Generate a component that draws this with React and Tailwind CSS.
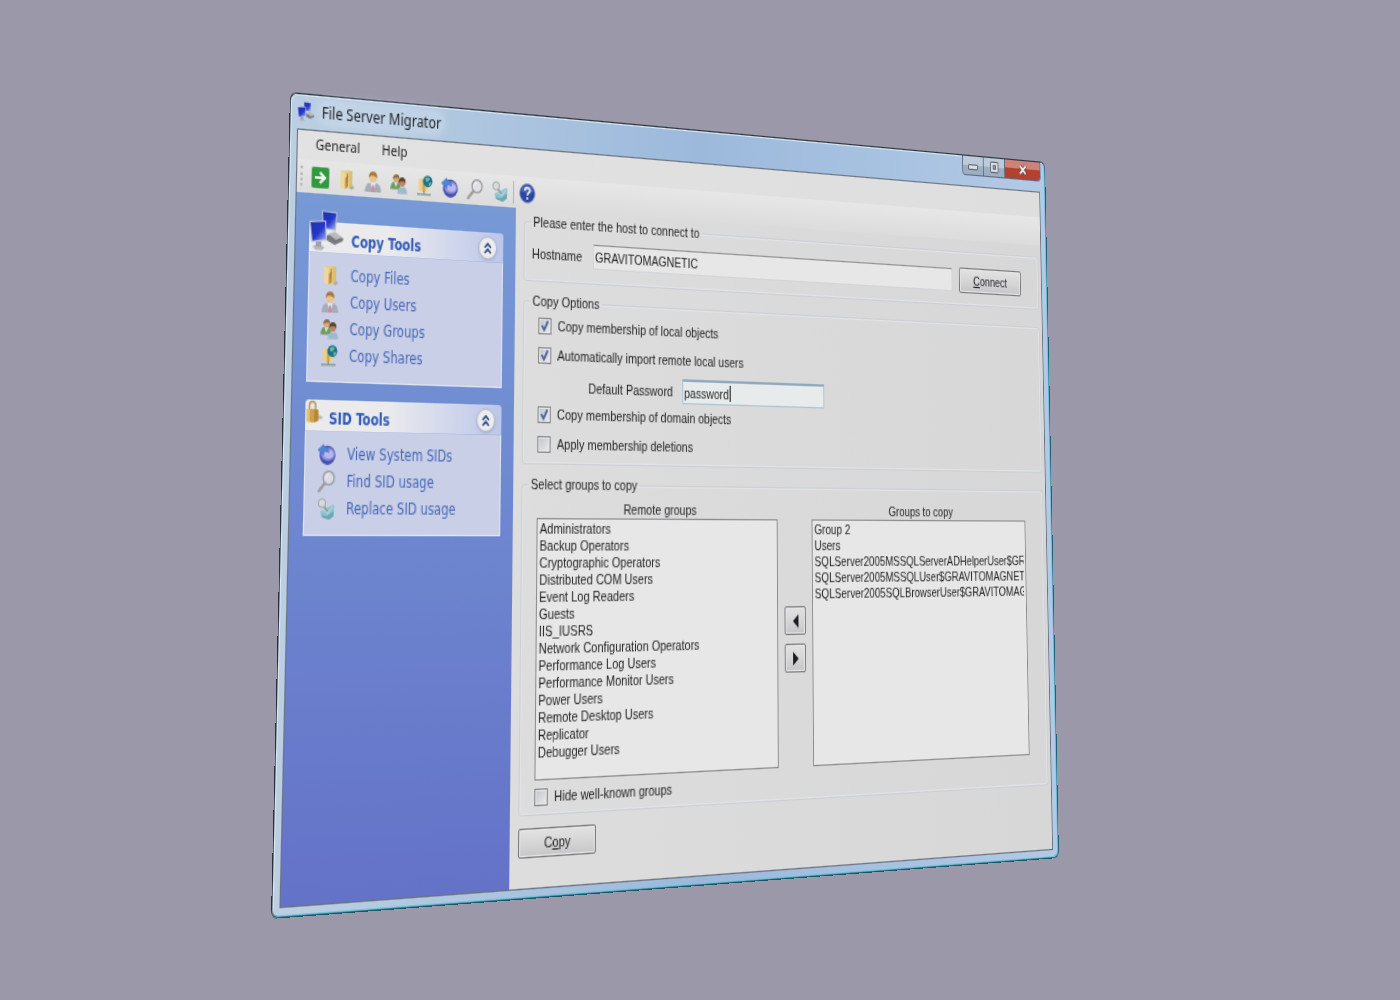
import React, { useState } from "react";

const remoteGroups = [
  "Administrators",
  "Backup Operators",
  "Cryptographic Operators",
  "Distributed COM Users",
  "Event Log Readers",
  "Guests",
  "IIS_IUSRS",
  "Network Configuration Operators",
  "Performance Log Users",
  "Performance Monitor Users",
  "Power Users",
  "Remote Desktop Users",
  "Replicator",
  "Debugger Users",
];

const copyGroups = [
  "Group 2",
  "Users",
  "SQLServer2005MSSQLServerADHelperUser$GRAVITOMAGNETIC",
  "SQLServer2005MSSQLUser$GRAVITOMAGNETIC",
  "SQLServer2005SQLBrowserUser$GRAVITOMAGNETIC",
];

const ServersIcon = ({ className }) => (
  <svg viewBox="0 0 32 32" className={className} aria-hidden="true">
    <defs>
      <linearGradient id="screen" x1="0" y1="0" x2="1" y2="1">
        <stop offset="0" stopColor="#1d2fae" />
        <stop offset="0.55" stopColor="#2438c8" />
        <stop offset="1" stopColor="#a9b8ee" />
      </linearGradient>
    </defs>
    <path d="M16 19l7-2 8 4-1 2-7 3-9-4z" fill="#77797e" />
    <path d="M17 18l6-2 7 4-6 2z" fill="#b9bbbe" />
    <path d="M3 28l5-2 6 2-2 2.500-6 0z" fill="#b4b7bd" />
    <path d="M6 24h5v4H6z" fill="#9ea2aa" />
    <path d="M11 0.500l14 1-1 14-12-1z" fill="#b9bfd6" />
    <path d="M12 1.500l12 0.800-1 12-10-0.800z" fill="url(#screen)" />
    <path d="M0 9l15-1 1 15-14 2z" fill="#c3c8dc" />
    <path d="M1 10l13-1 1 13-12 1.800z" fill="url(#screen)" />
  </svg>
);

const ArrowIcon = () => (
  <svg viewBox="0 0 16 16" className="size-4" aria-hidden="true">
    <rect x="0.500" y="0.500" width="15" height="15" rx="1" fill="#2f9a3b" stroke="#4c9a55" />
    <path d="M3 8h9M7.500 4l4.500 4-4.500 4" fill="none" stroke="#f2f6f0" strokeWidth="2.200" />
  </svg>
);

const FilesIcon = () => (
  <svg viewBox="0 0 16 16" className="size-4" aria-hidden="true">
    <path d="M2 1.500l6-0.500 5 0.500v12l-5 1.500-6-1z" fill="#e6cb88" />
    <path d="M2 1.500l4.500 1.500V15L2 14z" fill="#eed79c" />
    <path d="M6.500 7l2.500-3v9l-2.500 2z" fill="#b98c40" />
    <path d="M9.500 1.200l3.500 0.300v11.500l-3.500 0.500z" fill="#dfbe74" />
    <path d="M8.300 3v7" stroke="#a5803c" strokeWidth="0.800" />
    <path d="M10 14l3-2 2 1.500-2.500 2z" fill="#aab09c" />
  </svg>
);

const UserIcon = () => (
  <svg viewBox="0 0 16 16" className="size-4" aria-hidden="true">
    <path d="M0.500 16c0-4.500 2-6.500 4.500-7h6c2.500 0.500 4.500 2.500 4.500 7z" fill="#a6acb9" />
    <path d="M5.500 9L8 16 10.500 9z" fill="#e4e8f2" />
    <path d="M7.300 10.500h1.400l0.700 5.500H6.600z" fill="#d4899a" />
    <circle cx="8" cy="5" r="3.600" fill="#e9c28f" />
    <path d="M4.200 5C4 1.500 6 0.300 8 0.300s4 1.200 3.800 4.700C10.500 4 9 3.600 7 3.200 6 3.600 5 4 4.200 5z" fill="#a8783c" />
  </svg>
);

const GroupIcon = () => (
  <svg viewBox="0 0 16 16" className="size-4" aria-hidden="true">
    <path d="M0 12.500c0-3.500 1.500-5.500 3.500-5.800h3c2 0.300 3 2 3 5.800z" fill="#6f9a62" />
    <path d="M3.500 7l1.500 4L7 7z" fill="#dfe5da" />
    <circle cx="5.500" cy="4.300" r="2.900" fill="#d9a877" />
    <path d="M2.300 4.700C2.300 2 4 0.800 5.800 0.900 7.800 1 8.500 2.500 8.300 4 7 3.500 5 2.800 2.300 4.700z" fill="#8a6a46" />
    <path d="M6.500 15.800c0-3.200 1.500-5 3.500-5.300h2.800c2 0.300 3 2.300 3 5.300z" fill="#9fb9cc" />
    <circle cx="11" cy="6.800" r="3.100" fill="#b98562" />
    <path d="M7.600 7.500C7.600 4 9.500 3 11 3s3.300 1 3.200 4.200C12.500 5.800 10 5.600 7.600 7.500z" fill="#5d4334" />
  </svg>
);

const ShareIcon = () => (
  <svg viewBox="0 0 16 16" className="size-4" aria-hidden="true">
    <path d="M2.500 3l6-1 3 1v9l-4 1-5-1z" fill="#ebd08a" />
    <path d="M6 3.500l2.500-1V12L6.500 13z" fill="#caa050" />
    <circle cx="11" cy="4.600" r="4.400" fill="#1f6f94" />
    <path d="M8.500 2.500c2-1.800 4-1 4.500 0L11.500 4.500l-2 0.500zM11.500 6l2.500-1 0.500 1.500L12.500 8z" fill="#6fc08a" />
    <path d="M7.500 12v2.500M1 14.800h13" stroke="#829487" strokeWidth="1.200" />
  </svg>
);

const ViewIcon = () => (
  <svg viewBox="0 0 16 16" className="size-4" aria-hidden="true">
    <circle cx="8.500" cy="8.800" r="7.100" fill="#4a4fae" />
    <ellipse cx="8.800" cy="8" rx="6.200" ry="4.800" fill="#8f90de" />
    <ellipse cx="9.500" cy="8" rx="4.200" ry="3" fill="#b9b8ee" />
    <path d="M0 5L5 0.800v2c3-0.500 4.500 0.700 4.500 4-1.500-0.800-2.500-1-4.500-0.800v2.500z" fill="#4f86d8" stroke="#3d68b6" strokeWidth="0.500" />
  </svg>
);

const FindIcon = () => (
  <svg viewBox="0 0 16 16" className="size-4" aria-hidden="true">
    <path d="M6.500 9.500L1.500 15" stroke="#a09a98" strokeWidth="2.200" strokeLinecap="round" />
    <circle cx="10" cy="5.500" r="4.900" fill="#dfe0e6" fillOpacity="0.700" stroke="#9b9a9f" strokeWidth="1.300" />
    <path d="M7.200 5.500c0-1.800 1.200-2.800 2.800-2.800" fill="none" stroke="#f4f4f4" />
  </svg>
);

const ReplaceIcon = () => (
  <svg viewBox="0 0 16 16" className="size-4" aria-hidden="true">
    <path d="M3 10l5-2 6-3 1.500 1-0.500 7-4 3-7-2z" fill="#8fc4cf" />
    <path d="M4 12.500l5 1 6-4v4l-4 2.500-6-1.500z" fill="#6aa7b9" />
    <path d="M6 9l4 2 4-4.500" fill="none" stroke="#b4d6de" strokeWidth="1.100" />
    <circle cx="4.500" cy="4" r="3.200" fill="#d8dcdc" stroke="#9fa8a8" />
    <path d="M6.500 6.500l3 3.500" stroke="#8c9a9a" strokeWidth="1.600" />
  </svg>
);

const HelpIcon = () => (
  <svg viewBox="0 0 16 16" className="size-4" aria-hidden="true">
    <circle cx="8" cy="8" r="7.500" fill="#2c46a0" stroke="#8e9bc6" strokeWidth="0.800" />
    <path d="M2 6.500a6.200 6.200 0 0 1 12 0c-3 1.800-8 2-12 0z" fill="#6079c4" fillOpacity="0.600" />
    <path d="M5.600 6c0-3.200 5-3 5-0.300 0 1.800-2.500 1.900-2.500 4" fill="none" stroke="#eef0f6" strokeWidth="1.700" />
    <circle cx="8" cy="12" r="1.100" fill="#eef0f6" />
  </svg>
);

const LockIcon = ({ className }) => (
  <svg viewBox="0 0 16 18" className={className} aria-hidden="true">
    <path d="M9 14l5 0.500 2-1.500-4-2z" fill="#8f8c88" fillOpacity="0.500" />
    <path d="M3.500 8V4.500C3.500 0.500 9 0.500 9 4.500V8" fill="none" stroke="#b39a62" strokeWidth="1.500" />
    <path d="M1 7.500l5-0.700 5.500 0.700v8L7 17l-6-1z" fill="#cfa24a" />
    <path d="M1 7.500l3-0.400v9.400L1 16z" fill="#e2c274" />
    <path d="M8 7.200l3.500 0.300v8L8 16.700z" fill="#b08638" />
  </svg>
);

const ChevronButton = ({ label }) => (
  <button
    aria-label={label}
    className="mr-[6px] ml-auto flex size-[18px] items-center justify-center rounded-full border border-[#b4b8cc] bg-[#ececee] shadow-sm"
  >
    <svg viewBox="0 0 10 10" className="size-[10px]" fill="none" stroke="#26407f" strokeWidth="1.500">
      <path d="M2 4.800L5 1.900l3 2.900M2 9l3-2.900L8 9" />
    </svg>
  </button>
);

const tools = [
  { name: "Connect", icon: ArrowIcon },
  { name: "Copy Files", icon: FilesIcon },
  { name: "Copy Users", icon: UserIcon },
  { name: "Copy Groups", icon: GroupIcon },
  { name: "Copy Shares", icon: ShareIcon },
  { name: "View System SIDs", icon: ViewIcon },
  { name: "Find SID usage", icon: FindIcon },
  { name: "Replace SID usage", icon: ReplaceIcon },
];

const TaskPanel = ({ title, icon, items, wide }) => (
  <section>
    <div className="relative flex h-[23px] items-center rounded-t-[3px] bg-linear-to-r from-[#ebebed] from-40% to-[#bcc6ea]">
      {icon}
      <h2
        className={`pt-1 text-[12px] leading-[14px] font-bold text-[#3059b4] ${wide ? "pl-[38px]" : "pl-[21px]"}`}
      >
        {title}
      </h2>
      <ChevronButton label={`Collapse ${title}`} />
    </div>
    <ul className="border border-t-0 border-[#e2e5f0] bg-[#c9cfe6] pt-[7px] pb-[9px] pl-[11px]">
      {items.map(({ name, icon: Icon }) => (
        <li key={name} className="h-5">
          <a href="#" className="flex h-5 items-center gap-[10px] whitespace-nowrap text-[12px] text-[#4668b8]">
            <Icon />
            {name}
          </a>
        </li>
      ))}
    </ul>
  </section>
);

const CheckRow = ({ label, defaultChecked }) => {
  const [checked, setChecked] = useState(!!defaultChecked);
  return (
    <label className="flex h-[23px] items-center gap-[6px] pl-[14px]">
      <span className="relative flex size-[13px]">
        <input
          type="checkbox"
          checked={checked}
          onChange={(e) => setChecked(e.target.checked)}
          className="size-[13px] appearance-none border border-[#85878b] bg-linear-to-br from-[#bfc3ca] to-[#ececec] shadow-[inset_0_0_0_1px_#e6e6e6]"
        />
        {checked && (
          <svg viewBox="0 0 13 13" className="pointer-events-none absolute inset-0 size-[13px]" fill="none">
            <path d="M3.500 6l2.300 3.500L9.500 2.500" stroke="#4a5f9e" strokeWidth="1.800" />
          </svg>
        )}
      </span>
      {label}
    </label>
  );
};

const ListBox = ({ id, label, items }) => (
  <div className="flex min-w-0 flex-1 flex-col">
    <label htmlFor={id} className="text-center">
      {label}
    </label>
    <select
      id={id}
      multiple
      className="h-[198px] w-full appearance-none overflow-hidden border border-[#8b8c90] bg-[#e7e7e7] bg-none px-[2px] pt-px text-[11px] leading-[13px] text-[#252528]"
    >
      {items.map((item) => (
        <option key={item} className="h-[13px] min-h-0 overflow-hidden p-0 leading-[13px]">
          {item}
        </option>
      ))}
    </select>
  </div>
);

const Group = ({ title, className, children }) => (
  <fieldset className={`min-w-0 rounded-[3px] border border-[#cbd0d6] shadow-[inset_0_0_0_1px_#e2e3e5] ${className}`}>
    <legend className="ml-[6px] h-[13px] px-[2px]">{title}</legend>
    {children}
  </fieldset>
);

const pushButton =
  "rounded-[2px] border border-[#77787b] bg-linear-to-b from-[#e2e2e2] via-[#d6d6d7] via-50% to-[#c6c6c8] shadow-[inset_0_0_0_1px_#e6e6e6]";

const App = () => {
  const [host, setHost] = useState("GRAVITOMAGNETIC");
  const [password, setPassword] = useState("password");

  return (
    <div className="flex min-h-screen items-center justify-center overflow-hidden bg-[#9b98aa]">
      <main className="w-full max-w-[800px] origin-top-left rounded-[6px] border border-[#27323c] border-r-[#1b6479] border-b-[#1b5568] bg-linear-to-r from-[#bccfe2] via-[#9cb9dc] to-[#b3cae6] px-[6px] pb-[6px] font-['Liberation_Sans',sans-serif] text-[11px] leading-[13px] text-[#252528] shadow-[inset_-1px_-1px_0_0_#6cc0d8,inset_1px_1px_0_0_#dce8f2] [transform:matrix3d(1.115343,0.078745,0,0.000230325,-0.029492,1.324217,0,-0.00007525,0,0,1,0,-10,-108,0,1)]">
        <header className="flex h-[26px] items-start font-['Noto_Sans','Open_Sans',sans-serif]">
          <div className="flex h-[25px] items-center gap-[6px]">
            <ServersIcon className="size-4" />
            <h1 className="rounded-full bg-[#c8d8ea]/60 text-[12px] text-[#1f2126] shadow-[0_0_6px_4px_rgba(205,220,236,0.6)]">
              File Server Migrator
            </h1>
          </div>
          <div className="-mr-px ml-auto flex h-[17px] overflow-hidden rounded-b-[4px] border border-t-0 border-[#5d6c80]">
            <button
              aria-label="Minimize"
              className="flex w-[25px] items-center justify-center border-r border-[#5d6c80] bg-linear-to-b from-[#bccada] from-50% to-[#9dadc2] to-50% pt-[3px]"
            >
              <span className="h-[5px] w-[12px] rounded-[1px] border border-[#5b6370] bg-[#dcdde0]" />
            </button>
            <button
              aria-label="Maximize"
              className="flex w-[26px] items-center justify-center border-r border-[#5d6c80] bg-linear-to-b from-[#bccada] from-50% to-[#9dadc2] to-50%"
            >
              <span className="flex size-[10px] items-center justify-center rounded-[1px] border border-[#5b6370] bg-[#dcdde0]">
                <span className="size-[4px] border border-[#5b6370] bg-[#9dadc2]" />
              </span>
            </button>
            <button
              aria-label="Close"
              className="flex w-[43px] items-center justify-center bg-linear-to-b from-[#cf8378] from-45% to-[#b2412f] to-45%"
            >
              <svg viewBox="0 0 12 10" className="h-[10px] w-[12px]" fill="none">
                <path d="M2.500 1.500l7 7M9.500 1.500l-7 7" stroke="#5d3a3a" strokeWidth="3.800" />
                <path d="M2.500 1.500l7 7M9.500 1.500l-7 7" stroke="#ededed" strokeWidth="2.200" />
              </svg>
            </button>
          </div>
        </header>

        <div className="border border-[#6b7480] bg-linear-to-r from-[#dfdfdf] to-[#d7d7d7]">
          <nav className="flex h-[22px] items-center gap-[20px] bg-linear-to-r from-[#e2e2e2] to-[#dedede] pb-[3px] pl-4 font-['Noto_Sans','Open_Sans',sans-serif]">
            <button>General</button>
            <button>Help</button>
          </nav>

          <div className="flex h-[25px] items-center bg-linear-to-b from-[#e7e7e7] to-[#dcdcdc] pl-[3px]">
            <span className="mr-1 h-[15px] border-l-2 border-dotted border-[#b5b5b8]" />
            {tools.map(({ name, icon: Icon }) => (
              <button key={name} aria-label={name} className="flex w-6 justify-center">
                <Icon />
              </button>
            ))}
            <span className="mx-px h-[18px] w-px bg-[#b3b5ba]" />
            <button aria-label="Help" className="flex w-6 justify-center">
              <HelpIcon />
            </button>
          </div>

          <div className="flex">
            <aside className="flex w-[205px] shrink-0 flex-col gap-[13px] bg-linear-to-b from-[#7799d6] to-[#6472c8] px-[12px] pt-[21px] font-['DejaVu_Sans_Condensed','Noto_Sans',sans-serif]">
              <TaskPanel
                title="Copy Tools"
                wide
                icon={<ServersIcon className="absolute bottom-0 left-0 size-8" />}
                items={tools.slice(1, 5)}
              />
              <TaskPanel
                title="SID Tools"
                icon={<LockIcon className="absolute top-0 left-0 h-[18px] w-4" />}
                items={tools.slice(5)}
              />
            </aside>

            <div className="flex min-w-0 flex-1 flex-col gap-[9px] pt-1 pr-[3px] pb-[22px] pl-[8px]">
              <Group title="Please enter the host to connect to" className="pb-[10px]">
                <div className="flex h-[29px] items-end gap-[8px] pr-[21px] pl-[7px]">
                  <label htmlFor="host" className="flex h-[22px] w-[53px] items-center">
                    Hostname
                  </label>
                  <input
                    id="host"
                    value={host}
                    onChange={(e) => setHost(e.target.value)}
                    className="mb-px h-5 min-w-0 flex-1 border border-[#d3d5d9] border-t-[#8f9094] bg-[#e7e7e7] px-px outline-none"
                  />
                  <button className={`h-[22px] w-[75px] ${pushButton}`}>
                    <u>C</u>onnect
                  </button>
                </div>
              </Group>

              <Group title="Copy Options" className="pt-px pb-[3px]">
                <CheckRow label="Copy membership of local objects" defaultChecked />
                <CheckRow label="Automatically import remote local users" defaultChecked />
                <div className="flex h-[23px] items-end pl-[64px]">
                  <label htmlFor="password" className="flex h-5 w-[96px] items-center">
                    Default Password
                  </label>
                  <div className="relative">
                    <input
                      id="password"
                      value={password}
                      onChange={(e) => setPassword(e.target.value)}
                      className="h-5 w-[153px] border border-[#a9c4d6] border-t-2 border-t-[#8fa9be] bg-[#e7ebeb] px-px caret-transparent outline-none"
                    />
                    <span className="pointer-events-none absolute top-[4px] left-[50px] h-[13px] w-px bg-black" />
                  </div>
                </div>
                <CheckRow label="Copy membership of domain objects" defaultChecked />
                <CheckRow label="Apply membership deletions" />
              </Group>

              <Group title="Select groups to copy" className="pb-px">
                <div className="mb-px flex gap-[5px] pt-[6px] pr-[21px] pl-[14px]">
                  <ListBox id="remote" label="Remote groups" items={remoteGroups} />
                  <div className="flex w-[27px] flex-col items-center gap-[7px] pt-[83px]">
                    <button
                      aria-label="Remove group"
                      className={`flex size-[23px] items-center justify-center ${pushButton}`}
                    >
                      <svg viewBox="0 0 8 12" className="h-3 w-2">
                        <path d="M7 0.500v11L1 6z" fill="#1c1c20" />
                      </svg>
                    </button>
                    <button
                      aria-label="Add group"
                      className={`flex size-[23px] items-center justify-center ${pushButton}`}
                    >
                      <svg viewBox="0 0 8 12" className="h-3 w-2">
                        <path d="M1 0.500v11L7 6z" fill="#1c1c20" />
                      </svg>
                    </button>
                  </div>
                  <ListBox id="selected" label="Groups to copy" items={copyGroups} />
                </div>
                <CheckRow label="Hide well-known groups" />
              </Group>

              <button className={`h-[22px] w-[75px] ${pushButton}`}>
                C<u>o</u>py
              </button>
            </div>
          </div>
        </div>
      </main>
    </div>
  );
};

export default App;
